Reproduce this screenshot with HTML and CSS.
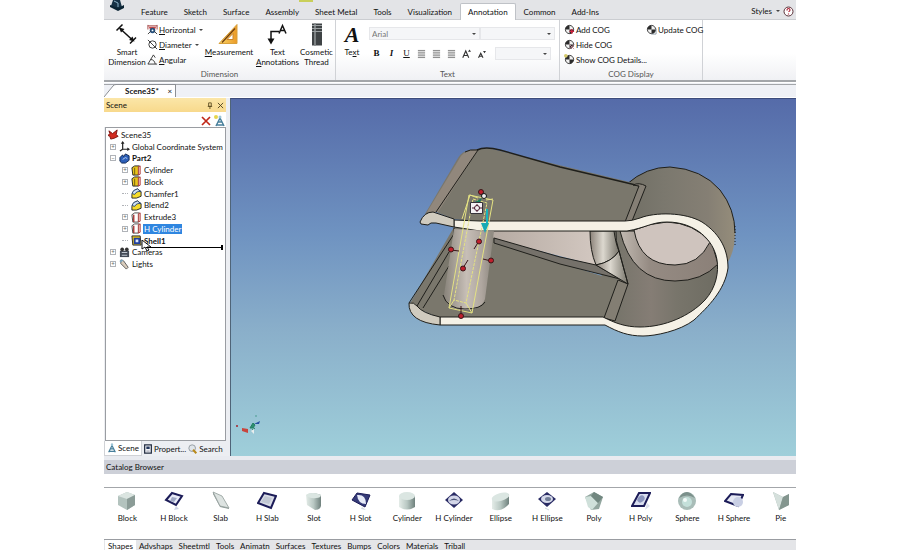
FILE: index.html
```html
<!DOCTYPE html>
<html lang="en">
<head>
<meta charset="utf-8">
<title>Scene35</title>
<link rel="stylesheet" href="styles.css">
</head>
<body>
<svg class="defs" aria-hidden="true">
  <defs>
    <linearGradient id="gBody" x1="0" x2="1"><stop offset="0" stop-color="#e4ece8"/><stop offset=".5" stop-color="#b9c8c3"/><stop offset="1" stop-color="#6f817d"/></linearGradient>
    <symbol id="i-feat" viewBox="0 0 12 12"><path d="M1 3l3-2h5l-1 10H2z" fill="#e9c61c" stroke="#222" /><path d="M4 3v8" stroke="#6b5a10"/><path d="M8 2l2-1v9l-2 1z" fill="#f5d9d0" stroke="#a33"/></symbol>
    <symbol id="i-feat2" viewBox="0 0 12 12"><path d="M1 3l3-2h5l-1 10H2z" fill="#fff" stroke="#444"/><path d="M3 3v8" stroke="#a33" stroke-width="1.5"/><path d="M8 2l2-1v9l-2 1z" fill="#f5d9d0" stroke="#a33"/></symbol>
    <symbol id="i-blend" viewBox="0 0 12 12"><path d="M1 7Q2 2 7 1l4 3v5l-5 2H1z" fill="#f5dc2c" stroke="#222"/><path d="M1 6q1-4 6-5l4 3q-5-1-7 3z" fill="#cfe1f4" stroke="#27436b"/></symbol>
    <symbol id="i-shell" viewBox="0 0 12 12"><path d="M1 1h9l1 10H2z" fill="#e9c61c" stroke="#222"/><path d="M4 4h5v5H4z" fill="#dfe9fb" stroke="#1f3f9c" stroke-width="2"/></symbol>
    <symbol id="i-cog" viewBox="0 0 12 12"><circle cx="6" cy="6" r="4.5" fill="#f2f2f2" stroke="#333"/><path d="M6 6V1.500A4.500 4.500 0 0 0 1.500 6zM6 6v4.500A4.500 4.500 0 0 0 10.500 6z" fill="#2b2b2b"/></symbol>
    <symbol id="i-lines" viewBox="0 0 10 10"><path d="M1 1h8M1 3h8M1 5h8M1 7h8M1 9h8" stroke="#777"/></symbol>
    <symbol id="i-tree" viewBox="0 0 12 12"><path d="M6 1v2M6 3L2 11M6 3l4 8M4 7h4M3 10h6" stroke="#49809c" fill="none" stroke-width="1.500"/><circle cx="6" cy="2" r="1.500" fill="#9cc5d8"/></symbol>
  </defs>
</svg>
<div class="app">
  <header class="menu">
    <svg class="logo" viewBox="0 0 17 11" aria-hidden="true"><path d="M4 0h7l2 7-5 2-6-3z" fill="#173246"/><path d="M1 5l8 3 6-3v3l-6 3-8-4z" fill="#0b2434"/><path d="M5 1l4 2v4" stroke="#8db3c8" fill="none"/></svg>
    <i class="marker"></i>
    <nav class="menu-tabs">
      <a href="#">Feature</a><a href="#">Sketch</a><a href="#">Surface</a><a href="#">Assembly</a><a href="#">Sheet Metal</a><a href="#">Tools</a><a href="#">Visualization</a><a href="#" class="active">Annotation</a><a href="#">Common</a><a href="#">Add-Ins</a>
    </nav>
    <button class="styles">Styles <span class="caret"></span></button>
    <button class="help" aria-label="Help"><svg viewBox="0 0 11 11"><circle cx="5.500" cy="5.500" r="4.500" fill="#fff" stroke="#5a3038"/><path d="M4 4.500q0-2 1.500-2t1.500 1.500q0 1-1.500 1.800M5.500 7.500v1" stroke="#b02035" fill="none" stroke-width="1.200"/></svg></button>
  </header>

  <section class="ribbon">
    <div class="group g-dim">
      <div class="tools">
        <button class="big w-smart"><svg viewBox="0 0 24 24"><path d="M5 6l13 12M1.500 8l6-6M15 21l6-6" stroke="#111" stroke-width="1.500" fill="none"/><path d="M4 5l5.500 1.500L6 10zM19.500 19l-5.500-1.500 3.500-3.500z" fill="#111"/></svg><span>Smart<br>Dimension</span></button>
        <div class="stack w-stack">
          <button><svg viewBox="0 0 12 12"><path d="M1 1v5M11 1v5M1 2h10" stroke="#a04040"/><path d="M2 3h8l-2 5H4z" fill="#c84a4a"/><circle cx="6" cy="7" r="3" fill="#26507c"/><circle cx="6" cy="7" r="1" fill="#fff"/><path d="M1 11l3-3M11 11L8 8" stroke="#333"/></svg><span><u>H</u>orizontal</span><span class="caret"></span></button>
          <button><svg viewBox="0 0 12 12"><circle cx="6" cy="6" r="4" fill="none" stroke="#333"/><path d="M1 1l10 10" stroke="#333"/></svg><span><u>D</u>iameter</span><span class="caret"></span></button>
          <button><svg viewBox="0 0 12 12"><path d="M7 1L1 11h10M4 6q4 0 5 5M7 1l2 3" fill="none" stroke="#333"/></svg><span><u>A</u>ngular</span></button>
        </div>
        <button class="big w-meas"><svg viewBox="0 0 24 24"><defs><linearGradient id="gRule" x2="1"><stop offset="0" stop-color="#f9d66a"/><stop offset="1" stop-color="#eb9a26"/></linearGradient></defs><path d="M20 2v19H2z" fill="url(#gRule)" stroke="#d9a13c"/><path d="M16 11v6h-6z" fill="#fff" stroke="#c9842f"/><path d="M5 20L18 6" stroke="#6b3a10" stroke-width="1.200"/></svg><span><u>M</u>easurement</span></button>
        <button class="big w-note"><svg viewBox="0 0 24 24"><path d="M5 19V9h8" fill="none" stroke="#111" stroke-width="1.500"/><path d="M5 22l-3.500-6h7z" fill="#111"/><path d="M13 11l3.500-8L20 11M14 8h5" fill="none" stroke="#111" stroke-width="1.500"/></svg><span>Text<br><u>A</u>nnotations</span></button>
        <button class="big w-thread"><svg viewBox="0 0 24 24"><path d="M7 1h10v22H7z" fill="#3f4345"/><path d="M10 1v22" stroke="#7b8082" stroke-width="2"/><path d="M7 6h10M7 3h10M7 9h10" stroke="#9ba0a2"/></svg><span>Cosmetic<br>Thread</span></button>
      </div>
      <h2>Dimension</h2>
    </div>
    <div class="group g-text">
      <div class="tools">
        <button class="big w-text"><b class="big-a">A</b><span>Te<u>x</u>t</span></button>
        <div class="format">
          <div class="row">
            <label class="combo font"><select aria-label="Font"><option>Arial</option></select><i class="caret"></i></label>
            <label class="combo size"><select aria-label="Size"><option></option></select><i class="caret"></i></label>
          </div>
          <div class="row low">
            <button class="fmt"><b>B</b></button><button class="fmt"><b><em>I</em></b></button><button class="fmt"><u>U</u></button>
            <button class="fmt" aria-label="Left"><svg viewBox="0 0 10 10"><use href="#i-lines"/></svg></button><button class="fmt" aria-label="Center"><svg viewBox="0 0 10 10"><use href="#i-lines"/></svg></button><button class="fmt" aria-label="Right"><svg viewBox="0 0 10 10"><use href="#i-lines"/></svg></button>
            <button class="fmt" aria-label="Grow"><svg viewBox="0 0 12 12"><path d="M1 11L5 2l4 9M3 8h4" fill="none" stroke="#333" stroke-width="1.500"/><path d="M8 3l2-3 2 3z" fill="#333"/></svg></button><button class="fmt" aria-label="Shrink"><svg viewBox="0 0 12 12"><path d="M2 11l3-6 3 6M3 9h4" fill="none" stroke="#333" stroke-width="1.500"/><path d="M8 2l2 3 2-3z" fill="#333"/></svg></button>
            <label class="combo pick"><select aria-label="Style"><option></option></select><i class="caret"></i></label>
          </div>
        </div>
      </div>
      <h2>Text</h2>
    </div>
    <div class="group g-cog">
      <div class="tools">
        <div class="stack w-cog">
          <button><svg viewBox="0 0 12 12"><use href="#i-cog"/><path d="M6 8h5M8.500 5.500v5" stroke="#d0203c" stroke-width="1.500"/></svg><span>Add COG</span></button>
          <button><svg viewBox="0 0 12 12"><use href="#i-cog"/><path d="M6 6l5 5M11 6l-5 5" stroke="#c88a98"/></svg><span>Hide COG</span></button>
          <button><svg viewBox="0 0 12 12"><use href="#i-cog"/><circle cx="2" cy="2" r="2" fill="#d5c96a"/></svg><span>Show COG Details...</span></button>
        </div>
        <div class="stack">
          <button><svg viewBox="0 0 12 12"><use href="#i-cog"/><path d="M11 5v6H6" stroke="#8d9aa5" fill="none"/></svg><span>Update COG</span></button>
        </div>
      </div>
      <h2>COG Display</h2>
    </div>
  </section>

  <div class="docs">
    <div class="doc"><svg class="slope" viewBox="0 0 14 13" preserveAspectRatio="none"><path d="M0 13L9 2q1-1 3-1h2v12z" fill="#fff"/><path d="M0 13L9 2q1-1.500 3-1.500h2" fill="none" stroke="#8c8f94"/></svg><b>Scene35*</b><button aria-label="Close">×</button></div>
  </div>

  <main class="work">
    <aside class="side">
      <div class="side-head"><span>Scene</span><svg viewBox="0 0 8 8"><path d="M3 1h3v4H3zM2 5h5M4.500 5v3" fill="none" stroke="#5b4c20"/></svg><svg viewBox="0 0 8 8"><path d="M1 1l6 6M7 1L1 7" stroke="#4a3e1c"/></svg></div>
      <div class="side-tools"><button aria-label="Delete"><svg viewBox="0 0 12 12"><path d="M2 2l8 8M10 2l-8 8" stroke="#c02818" stroke-width="1.700"/></svg></button><button aria-label="New"><svg viewBox="0 0 12 12"><use href="#i-tree"/><circle cx="2" cy="2" r="2" fill="#e5d64c"/></svg></button></div>
      <div class="tree-box">
        <ul class="tree">
          <li><svg viewBox="0 0 12 12"><path d="M1 2l4 3 5-4-1 5 2 2-4 2-4 1-1-3-2-1 2-2z" fill="#d22b20" stroke="#7a100c"/></svg><span>Scene35</span></li>
          <li class="l1"><i class="box">+</i><svg viewBox="0 0 12 12"><path d="M4 1v8h7M4 9l-3 2" fill="none" stroke="#222" stroke-width="1.300"/><path d="M2 3l2-3 2 3zM9 7l3 2-3 2z" fill="#222"/></svg><span>Global Coordinate System</span></li>
          <li class="l1"><i class="box">−</i><svg viewBox="0 0 12 12"><path d="M1 5l3-3 1 2 2-3 4 2v5l-4 3H3L1 9z" fill="#2c5fb8" stroke="#0e2550"/><path d="M4 7l3-2 2 1" stroke="#bcd3f5" fill="none"/></svg><b>Part2</b></li>
          <li class="l2"><i class="box">+</i><svg viewBox="0 0 12 12"><use href="#i-feat"/></svg><span>Cylinder</span></li>
          <li class="l2"><i class="box">+</i><svg viewBox="0 0 12 12"><use href="#i-feat"/></svg><span>Block</span></li>
          <li class="l2"><i class="stub"></i><svg viewBox="0 0 12 12"><use href="#i-blend"/></svg><span>Chamfer1</span></li>
          <li class="l2"><i class="stub"></i><svg viewBox="0 0 12 12"><use href="#i-blend"/></svg><span>Blend2</span></li>
          <li class="l2"><i class="box">+</i><svg viewBox="0 0 12 12"><use href="#i-feat2"/></svg><span>Extrude3</span></li>
          <li class="l2"><i class="box">+</i><svg viewBox="0 0 12 12"><use href="#i-feat2"/></svg><span class="selected">H Cylinder</span></li>
          <li class="l2"><i class="stub"></i><svg viewBox="0 0 12 12"><use href="#i-shell"/></svg><b>Shell1</b>
            <svg class="drop" viewBox="0 0 84 14"><path d="M1 0v9l3-2 2 4 2-1-2-3h4z" fill="#fff" stroke="#111"/><path d="M5 7.500h76" stroke="#000"/><path d="M81 5v5" stroke="#000" stroke-width="2"/></svg></li>
          <li class="l1"><i class="box">+</i><svg viewBox="0 0 12 12"><path d="M1 4h10v7H1z" fill="#444b57"/><circle cx="3.500" cy="2.500" r="2" fill="#333"/><circle cx="8.500" cy="2.500" r="2" fill="#333"/><path d="M3 6h6M3 9h6" stroke="#cdd3dc"/></svg><span>Cameras</span></li>
          <li class="l1"><i class="box">+</i><svg viewBox="0 0 12 12"><path d="M2 1l3 1 5 7-2 2-6-6z" fill="#d9cdbd" stroke="#555"/><path d="M1 3l3-2" stroke="#7aa6c0" stroke-width="2"/></svg><span>Lights</span></li>
        </ul>
      </div>
      <nav class="side-tabs">
        <a href="#" class="active"><svg viewBox="0 0 12 12"><use href="#i-tree"/></svg>Scene</a><a href="#"><svg viewBox="0 0 12 12"><path d="M2 1h8v10H2z" fill="#f2f4f8" stroke="#222c40" stroke-width="1.500"/><path d="M4 3h4v3H4z" fill="#23375c"/><path d="M4 8.500h4" stroke="#889"/></svg>Propert...</a><a href="#"><svg viewBox="0 0 12 12"><circle cx="5" cy="5" r="4" fill="#dfe5ea" stroke="#8a9299"/><path d="M6 7l4 4" stroke="#b98a1c" stroke-width="2.500"/></svg>Search</a>
      </nav>
    </aside>

    <div class="view">
      <svg viewBox="231 99 565 357" preserveAspectRatio="xMidYMid slice" role="img" aria-label="Part model">
        <defs>
          <linearGradient id="gDrum" x1="0" x2="1"><stop offset="0" stop-color="#716f65"/><stop offset=".35" stop-color="#7b786e"/><stop offset=".75" stop-color="#857f74"/><stop offset="1" stop-color="#958d7b"/></linearGradient>
          <linearGradient id="gIn" gradientUnits="userSpaceOnUse" x1="615" x2="718" y1="0" y2="0"><stop offset="0" stop-color="#76746a"/><stop offset=".35" stop-color="#857d75"/><stop offset=".6" stop-color="#78756b"/><stop offset="1" stop-color="#6e6c62"/></linearGradient>
          <linearGradient id="gPink" x1="0" x2="1"><stop offset="0" stop-color="#b5aaa2"/><stop offset="1" stop-color="#d3c8c1"/></linearGradient>
          <linearGradient id="gFil" x1="0" x2="1"><stop offset="0" stop-color="#8b8279"/><stop offset=".45" stop-color="#dcd8cf"/><stop offset="1" stop-color="#77746a"/></linearGradient>
          <linearGradient id="gTube" x1="0" x2="1"><stop offset="0" stop-color="#8a857c"/><stop offset=".45" stop-color="#cfc6bf"/><stop offset=".75" stop-color="#b5aca5"/><stop offset="1" stop-color="#8a857c"/></linearGradient>
          <linearGradient id="gRing" x1="0" x2="1"><stop offset="0" stop-color="#c2bab2"/><stop offset=".3" stop-color="#958b83"/><stop offset="1" stop-color="#8b8078"/></linearGradient>
        </defs>
        <g stroke="#1f1f1b" stroke-linejoin="round">
          <path d="M627 184Q646 167 670 167Q702 169 720 190Q735 209 735 233Q735 250 728 262L712 232Q690 213 665 214L627 222z" fill="url(#gDrum)" stroke="none"/>
          <path d="M627 184Q646 167 670 167Q702 169 720 190Q735 209 735 233" fill="none"/>
          <path d="M735 226v20" stroke-dasharray="1 2"/>
          <path d="M603 318C615 324 625 328 640 328C665 328 690 317 705 301C717 288 719 272 717 260C714 240 695 222 667 222L627 231L600 231z" fill="url(#gIn)" stroke="none"/>
          <path d="M454 227L409 305L440 318H603L618 281L494 242V227z" fill="#7a776c" stroke="none"/>
          <path d="M618 280L628 284L615 321L604 318z" fill="#837e73"/>
          <path d="M490 228H594L598 266L494 239z" fill="url(#gPink)" stroke="none"/>
          <path d="M494 238L560 257L596 265L620 279L560 264L494 243z" fill="#75716a"/>
          <path d="M590 231Q590 251 596 265Q612 262 619 251Q615 240 616 231z" fill="url(#gFil)"/>
          <path d="M596 265Q612 262 619 251L628 284z" fill="url(#gFil)"/>
          <path d="M614 231Q616 245 619 251L628 284" fill="none"/>
          <path d="M620 231Q632 281 675 281Q702 281 718 264L711 240Q693 222 667 222Q650 224 635 231z" fill="url(#gRing)"/>
          <path d="M634 230Q640 265 675 265Q699 265 710 242Q694 223 667 222Q650 223 634 230z" fill="#cfc4be"/>
          <path d="M425 214L458 158Q462 151 470 150L488 148L642 185L625 222H480L454 219L436 212z" fill="#7a776c" stroke="none"/>
          <path d="M427 212L461 156Q465 150 478 150L438 212z" fill="#91877c" stroke="none"/>
          <path d="M436 212L478 150M465 152Q470 149 477 150" fill="none"/>
          <path d="M477 150Q485 146 500 150L560 167L640 186" fill="none" stroke-width="1.500"/>
          <path d="M633 185Q639 182 646 186L632 221L625 222L639 186z" fill="#857f75"/>
          <path d="M454 220L480 221H625Q632 221 640 218C655 212 685 212 702 222C722 235 728 252 728 268C725 290 708 307 694 320C680 331 655 336 643 336C628 336 618 332 605 325H440V317H603C615 323 625 327 640 327C665 327 690 316 705 300C716 288 719 272 717 260C714 240 695 222 667 222C652 222 645 228 627 231H480L454 227z" fill="#f5f1e6"/>
          <path d="M420 222Q424 212 433 212L454 219V227L436 223Q430 222 428 225L421 224zM409 303Q414 302 417 306Q422 313 440 317V325Q408 322 409 303z" fill="#d0cbbf"/>
          <path d="M454 228V234L409 303M449 252L417 306M449 266L423 308" fill="none"/>
          <path d="M454 229L444 295Q446 310 465 310Q481 310 485 299L494 231z" fill="url(#gTube)" stroke="none" opacity=".9"/>
          <path d="M443 295Q447 309 465 309Q481 309 485 302" fill="none"/>
        </g>
        <g fill="none" stroke="#e4e283">
          <path d="M469 195L493 200L472 313L449 308z"/><path d="M473 199L487 203L466 303L454 300z" stroke-dasharray="3 1"/><path d="M462 219l8-24 8 3M486 200l7-1M449 308l5-8M472 313l-6-10"/>
        </g>
        <path d="M487 209V224" stroke="#16b4bd" stroke-width="2"/><path d="M481 223h8l-4 10z" fill="#16a9b4"/>
        <g stroke="#3a1718"><path d="M451 250l8 1M491 261l-8-2M479 241l-5 8M463 268l5-8M461 316v-10"/><g fill="#c01f2c"><circle cx="451" cy="249.500" r="2.500"/><circle cx="491" cy="260.500" r="2.500"/><circle cx="479" cy="241.500" r="2.500"/><circle cx="463" cy="268.500" r="2.500"/><circle cx="461" cy="316" r="2.500"/><circle cx="481" cy="192" r="2.500"/></g></g>
        <circle cx="484" cy="196" r="2.500" fill="#eee" stroke="#111"/>
        <path d="M475 202l7-4-3 6z" fill="#177c5c"/>
        <path d="M470.500 202.500h12v11h-12z" fill="#f4f1f4" stroke="#35323a"/><circle cx="477" cy="208" r="2.500" fill="none" stroke="#4a1c30"/><path d="M472 208h3M479 208h3M477 204v2M477 210v2" stroke="#4a1c30"/>
        <path d="M242 428l6 1v4l-6-2z" fill="#c8443c"/><path d="M250 428l3-5 2 2-2 3zM252 430l3-2" fill="#2b8f70" stroke="#247f61"/><path d="M254 424l6-3-1 3z" fill="#254da0"/><path d="M251 431l3-2v5z" fill="#e9eeee"/><path d="M236 425l2 2M238 425l-2 2" stroke="#a24b55"/><path d="M256 415v2" stroke="#4a9c90"/>
      </svg>
    </div>
  </main>

  <section class="catalog">
    <h2>Catalog Browser</h2>
    <div class="shelf">
      <a href="#"><svg viewBox="0 0 20 20"><path d="M1 5l9-4 8 3v10l-8 5-9-5z" fill="#b3c3be"/><path d="M1 5l9-4 8 3-8 4z" fill="#dbe5e1"/><path d="M10 8l8-4v10l-8 5z" fill="#8b9c97"/></svg>Block</a>
      <a href="#"><svg viewBox="0 0 20 20"><path d="M8 2l10 3-6 9L2 9z" fill="#e8ebf7" stroke="#1c1c58" stroke-width="2"/><path d="M8 6l5 1-3 4-4-1z" fill="#9fa8c4"/><path d="M12 15l3 3-5 1z" fill="#cfd5e6"/></svg>H Block</a>
      <a href="#"><svg viewBox="0 0 20 20"><path d="M2 1l9 4 7 12-9-2z" fill="#dde3e1" stroke="#a3adaa"/><path d="M2 1v2l7 13 9 2v-1l-9-2z" fill="#8f9b98"/></svg>Slab</a>
      <a href="#"><svg viewBox="0 0 20 20"><path d="M7 2l12 3-5 12L1 12z" fill="#d9dce6" stroke="#1c1c58" stroke-width="2"/><path d="M8 5l7 2-3 6-8-2z" fill="#c2c8d3"/></svg>H Slab</a>
      <a href="#"><svg viewBox="0 0 20 20"><path d="M2 4q5-4 15 0v11q-1 4-6 4L3 14z" fill="url(#gBody)"/><path d="M2 4q6-4 15 0 0 3-5 3Q6 8 2 4z" fill="#dbe6e2"/></svg>Slot</a>
      <a href="#"><svg viewBox="0 0 20 20"><path d="M6 2l13 2-5 12L1 9z" fill="#353b78" stroke="#1c1c58"/><path d="M6 4q9-1 9 9-8 0-9-9z" fill="#e7ebf8"/><path d="M11 16l4 3-5-1z" fill="#d3d9df"/></svg>H Slot</a>
      <a href="#"><svg viewBox="0 0 20 20"><path d="M2 5v11q8 5 16 0V5z" fill="url(#gBody)"/><ellipse cx="10" cy="5" rx="8" ry="4" fill="#dbe6e2"/></svg>Cylinder</a>
      <a href="#"><svg viewBox="0 0 20 20"><path d="M10 1l9 8-9 8-9-8z" fill="#292b64"/><ellipse cx="10" cy="9" rx="6" ry="4.500" fill="#d3d6e8"/><path d="M5 10q5-5 10 0-5-2-10 0z" fill="#4c5478"/></svg>H Cylinder</a>
      <a href="#"><svg viewBox="0 0 20 20"><path d="M1 8v10q9 4 17-5V3z" fill="url(#gBody)"/><ellipse cx="9.500" cy="6" rx="9" ry="4" transform="rotate(-15 9.500 6)" fill="#dbe6e2"/></svg>Ellipse</a>
      <a href="#"><svg viewBox="0 0 20 20"><path d="M10 1l9 7-9 8-9-8z" fill="#292b64"/><ellipse cx="10" cy="8" rx="6" ry="4" fill="#d6daea"/><ellipse cx="11" cy="8" rx="3" ry="2" fill="#727e98"/><path d="M8 17l4 2" stroke="#cdd5dc"/></svg>H Ellipse</a>
      <a href="#"><svg viewBox="0 0 20 20"><path d="M1 6l9-5 9 5-4 12-8 1z" fill="#92a69f"/><path d="M1 6l6-1 7 7-6 7-4-3z" fill="#cfe0da"/><path d="M10 1l9 5-5 6-7-7z" fill="#718780"/></svg>Poly</a>
      <a href="#"><svg viewBox="0 0 20 20"><path d="M8 2h11l-6 13H1z" fill="#d9deef" stroke="#1c1c58" stroke-width="2"/><ellipse cx="10" cy="8" rx="4" ry="3" transform="rotate(-40 10 8)" fill="#8b95bd"/><path d="M16 12l3 3-5 4z" fill="#dce0ec"/></svg>H Poly</a>
      <a href="#"><svg viewBox="0 0 20 20"><circle cx="10" cy="10" r="9" fill="#a9bdb8"/><path d="M2 7q8-5 16 0Q14 1 10 1 5 1 2 7z" fill="#7b908b"/><circle cx="10" cy="11" r="5" fill="#c4e0da"/><circle cx="8" cy="9" r="2" fill="#f3faf8"/></svg>Sphere</a>
      <a href="#"><svg viewBox="0 0 20 20"><path d="M7 3l12 1-5 11L1 10z" fill="#e6e9f4" stroke="#1c1c58" stroke-width="2"/><circle cx="14" cy="11" r="5" fill="#c9cfe4"/></svg>H Sphere</a>
      <a href="#"><svg viewBox="0 0 20 20"><path d="M2 1l10 5 6-3v11L8 19z" fill="#a3b5b0"/><path d="M2 1l10 5-4 13z" fill="#d5e0dc"/><path d="M12 6l6-3v11L8 19z" fill="#84968f"/></svg>Pie</a>
    </div>
    <nav class="sets">
      <a href="#" class="active">Shapes</a><a href="#">Advshaps</a><a href="#">Sheetmtl</a><a href="#">Tools</a><a href="#">Animatn</a><a href="#">Surfaces</a><a href="#">Textures</a><a href="#">Bumps</a><a href="#">Colors</a><a href="#">Materials</a><a href="#">Triball</a>
    </nav>
  </section>
</div>
</body>
</html>
```
FILE: styles.css
```css
* { box-sizing: border-box; }
body { margin: 0; background: #fff; color: #111; font: 8px/10px Lato, "Open Sans", sans-serif; }
a { color: inherit; text-decoration: none; }
button, select { margin: 0; padding: 0; border: 0; background: none; color: inherit; font: inherit; }
h2 { margin: 0; font: inherit; }
svg { display: block; flex: none; }
.defs { position: absolute; width: 0; height: 0; }
.app { display: flex; flex-direction: column; height: 100vh; margin: 0 104px; overflow: hidden; background: #e3e5ea; }
.caret { width: 0; height: 0; border: 2px solid transparent; border-top-color: #444; border-bottom: 0; }

.menu { position: relative; display: flex; align-items: flex-end; height: 20px; background: #e3e4e7; border-bottom: 1px solid #cbcdd1; white-space: nowrap; }
.logo { align-self: flex-start; width: 17px; height: 11px; margin: 0 7px 0 5px; }
.marker { position: absolute; left: 195px; top: 0; width: 14px; height: 2px; background: #c9cf5a; }
.menu-tabs { display: flex; flex: 1; margin-bottom: -1px; }
.menu-tabs a { height: 17px; padding: 3px 7px; border: 1px solid transparent; border-bottom: 0; }
.menu-tabs .active { border-color: #bfc2c7; border-radius: 2px 2px 0 0; background: #fff; }
.styles { display: flex; align-items: center; gap: 4px; height: 16px; }
.help { width: 11px; height: 16px; margin: 0 2px 0 3px; }

.ribbon { display: flex; height: 62px; border-bottom: 2px solid #a3a6aa; background: linear-gradient(#fff 55%, #f0f1f4); white-space: nowrap; }
.group { display: flex; flex-direction: column; justify-content: space-between; padding: 2px 0 1px; border-right: 1px solid #d0d2d6; }
.group h2 { color: #555; text-align: center; }
.g-dim { width: 232px; }
.g-text { width: 224px; }
.g-cog { width: 143px; }
.tools { display: flex; }
.big { display: flex; flex-direction: column; align-items: center; }
.big svg { width: 24px; height: 25px; }
.w-smart { width: 43px; padding-left: 3px; }
.w-stack { width: 55px; }
.w-meas { width: 54px; }
.w-note { width: 43px; }
.w-thread { width: 35px; }
.w-text { width: 32px; }
.w-cog { width: 82px; }
.big-a { height: 25px; font: italic 900 22px/25px "Liberation Serif", serif; color: #111; }
.stack button { display: flex; align-items: center; gap: 1px; height: 15px; }
.stack svg { width: 11px; height: 11px; }
.stack .caret { margin-left: 2px; }
.g-cog .tools { padding-left: 4px; }
.format { flex: 1; padding: 5px 4px 0 1px; }
.row { display: flex; align-items: center; }
.combo { display: flex; align-items: center; height: 13px; padding-right: 3px; border: 1px solid #e6e7ea; background: #f5f6f8; color: #777; }
.combo select { flex: 1; min-width: 0; height: 11px; padding: 0 2px; appearance: none; }
.font { flex: 3; }
.size { flex: 2; }
.pick { flex: 1; margin-left: 6px; }
.low { margin-top: 7px; padding-right: 4px; }
.fmt { display: grid; place-items: center; width: 15px; height: 13px; font: 9px/13px "Liberation Serif", serif; }
.fmt svg { width: 9px; height: 10px; }

.docs { display: flex; align-items: flex-end; height: 16px; border-top: 1px solid #fff; border-bottom: 1px solid #fff; background: linear-gradient(#a3a6aa 0 0) 0 1px / 100% 1px no-repeat #eff1f6; }
.doc { display: flex; align-items: center; height: 13px; border-right: 1px solid #8c8f94; background: linear-gradient(#8c8f94 0 0) right top / calc(100% - 14px) 1px no-repeat, linear-gradient(90deg, transparent 14px, #fff 14px); }
.doc b { margin: 0 6px 0 7px; }
.slope { width: 14px; height: 13px; }
.doc button { width: 10px; }

.work { display: flex; flex: 1; min-height: 0; }
.side { display: flex; flex-direction: column; width: 126px; padding-right: 4px; background: #eceef2; }
.side-head { display: flex; align-items: center; gap: 4px; height: 14px; padding: 0 2px; background: linear-gradient(#fbe6a8, #f8d98c); }
.side-head span { flex: 1; }
.side-head svg { width: 7px; height: 7px; }
.side-tools { display: flex; justify-content: flex-end; gap: 2px; height: 15px; padding: 2px 0 0; background: #fff; }
.side-tools svg { width: 12px; height: 12px; }
.tree-box { flex: 1; margin-left: 1px; padding: 1px 2px 0 0; border: 1px solid #9a9da2; background: #fff; }
.tree { display: grid; grid-auto-rows: 1fr; height: 141px; margin: 0; padding: 0; list-style: none; white-space: nowrap; }
.tree li { position: relative; display: flex; align-items: center; gap: 2px; padding-left: 2px; }
.tree li > svg { width: 11px; height: 11px; }
.tree .l1 { padding-left: 4px; }
.tree .l2 { padding-left: 16px; }
.tree .l1 > svg, .tree .l2 > svg { margin-left: 1px; }
.box { width: 6px; height: 6px; border: 1px solid #b0b3b8; color: #666; font: 6px/4px Lato, sans-serif; text-align: center; }
.stub { width: 6px; border-top: 1px dotted #b0b3b8; }
.selected { margin-left: -1px; padding: 0 1px; background: #2f86e0; color: #fff; }
.tree li > .drop { position: absolute; left: 34px; top: 5px; z-index: 1; width: 84px; height: 14px; }
.side-tabs { display: flex; height: 15px; white-space: nowrap; }
.side-tabs a { display: flex; align-items: center; gap: 1px; padding: 0 1px; }
.side-tabs svg { width: 10px; height: 10px; }
.side-tabs .active { padding: 0 2px; border: 1px solid #d0d2d6; border-top: 0; background: #fff; }
.view { flex: 1; min-width: 0; border-top: 1px solid #3c4c7c; border-left: 1px solid #4f6478; background: linear-gradient(#556ba9, #6f93c1 38%, #8aafca 65%, #9fcfda); }
.view svg { width: 100%; height: 100%; }

.catalog { border-top: 4px solid #e9ebf0; background: #fff; }
.catalog h2 { height: 14px; padding: 2px; background: #cdd0d8; }
.shelf { display: grid; grid-template-columns: repeat(15, 1fr); height: 52px; margin: 13px -8px 0 0; padding-top: 3px; border-top: 1px solid #a3a6aa; white-space: nowrap; }
.shelf a { display: flex; flex-direction: column; align-items: center; gap: 2px; }
.shelf svg { width: 20px; height: 20px; }
.sets { display: flex; height: 11px; padding-left: 1px; border-top: 1px solid #999ca1; background: #e4e5e8; }
.sets a { padding: 1px 3px 0; }
.sets .active { background: #fff; }
```
